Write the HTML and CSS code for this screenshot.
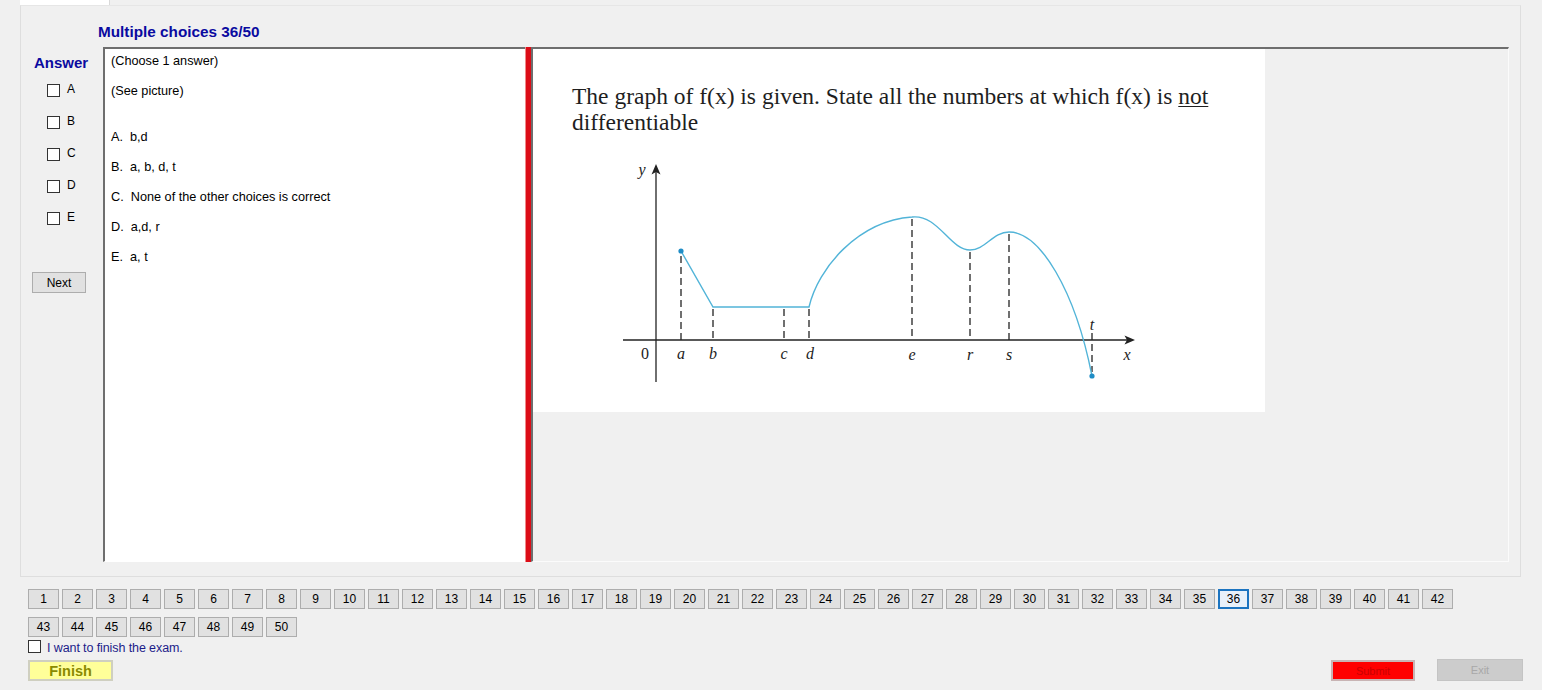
FILE: index.html
```html
<!DOCTYPE html>
<html>
<head>
<meta charset="utf-8">
<title>Exam</title>
<link rel="stylesheet" href="styles.css">
</head>
<body>
<div class="tabstrip"><div class="tab"></div></div>
<div class="tabpage">
  <div class="header"><span class="title">Multiple choices 36/50</span></div>
  <div class="main">
    <div class="leftcol">
      <div class="answer">Answer</div>
      <div class="opts">
        <div class="opt"><span class="cb"></span><span class="optlabel">A</span></div>
        <div class="opt"><span class="cb"></span><span class="optlabel">B</span></div>
        <div class="opt"><span class="cb"></span><span class="optlabel">C</span></div>
        <div class="opt"><span class="cb"></span><span class="optlabel">D</span></div>
        <div class="opt"><span class="cb"></span><span class="optlabel">E</span></div>
      </div>
      <div class="btn next">Next</div>
    </div>
    <div class="textpanel">
      <div class="line">(Choose 1 answer)</div>
      <div class="line">(See picture)</div>
      <div class="line gap">A.&nbsp; b,d</div>
      <div class="line">B.&nbsp; a, b, d, t</div>
      <div class="line">C.&nbsp; None of the other choices is correct</div>
      <div class="line">D.&nbsp; a,d, r</div>
      <div class="line">E.&nbsp; a, t</div>
    </div>
    <div class="redbar"></div>
    <div class="picpanel">
      <div class="picture">
        <div class="question">The graph of f(x) is given. State all the numbers at which f(x) is <u>not</u><br>differentiable</div>
        <svg class="graph" width="732" height="260" viewBox="533 140 732 260" xmlns="http://www.w3.org/2000/svg">
          <g stroke="#333" stroke-width="1.4" stroke-dasharray="7,4" fill="none">
            <line x1="681" y1="256" x2="681" y2="340"/>
            <line x1="713" y1="309" x2="713" y2="340"/>
            <line x1="784" y1="309" x2="784" y2="340"/>
            <line x1="809" y1="309" x2="809" y2="340"/>
            <line x1="912" y1="219" x2="912" y2="340"/>
            <line x1="970" y1="252" x2="970" y2="340"/>
            <line x1="1009" y1="234" x2="1009" y2="340"/>
            <line x1="1092" y1="333" x2="1092" y2="372"/>
          </g>
          <g stroke="#222" stroke-width="1.3" fill="none">
            <line x1="656" y1="170" x2="656" y2="382"/>
            <line x1="623" y1="340" x2="1128" y2="340"/>
          </g>
          <path d="M656,164 L660.5,174.5 L656,172 L651.5,174.5 Z" fill="#222"/>
          <path d="M1135,340 L1124.5,335.5 L1127,340 L1124.5,344.5 Z" fill="#222"/>
          <path d="M681,251 L713,307 L809,307 C818,268 858,221 912,217 C938,214 950,250 970,250 C985,250 993,232 1009,232 C1040,232 1075,290 1092,376" stroke="#52b4d8" stroke-width="1.4" fill="none"/>
          <circle cx="681" cy="251" r="2.6" fill="#1f8dc6"/>
          <circle cx="1092" cy="376" r="2.6" fill="#1f8dc6"/>
          <g font-family="'Liberation Serif', serif" font-size="16" font-style="italic" fill="#222" text-anchor="middle">
            <text x="642" y="175">y</text>
            <text x="681" y="359">a</text>
            <text x="713" y="359">b</text>
            <text x="784" y="359">c</text>
            <text x="810" y="359">d</text>
            <text x="912" y="360">e</text>
            <text x="970" y="360">r</text>
            <text x="1009" y="360">s</text>
            <text x="1127" y="360">x</text>
            <text x="1092" y="330">t</text>
          </g>
          <text x="645" y="359" font-family="'Liberation Serif', serif" font-size="16" fill="#222" text-anchor="middle">0</text>
        </svg>
      </div>
    </div>
  </div>
</div>
<div class="bottom">
  <div class="numrow">
    <div class="num">1</div><div class="num">2</div><div class="num">3</div><div class="num">4</div><div class="num">5</div><div class="num">6</div><div class="num">7</div><div class="num">8</div><div class="num">9</div><div class="num">10</div><div class="num">11</div><div class="num">12</div><div class="num">13</div><div class="num">14</div><div class="num">15</div><div class="num">16</div><div class="num">17</div><div class="num">18</div><div class="num">19</div><div class="num">20</div><div class="num">21</div><div class="num">22</div><div class="num">23</div><div class="num">24</div><div class="num">25</div><div class="num">26</div><div class="num">27</div><div class="num">28</div><div class="num">29</div><div class="num">30</div><div class="num">31</div><div class="num">32</div><div class="num">33</div><div class="num">34</div><div class="num">35</div><div class="num current">36</div><div class="num">37</div><div class="num">38</div><div class="num">39</div><div class="num">40</div><div class="num">41</div><div class="num">42</div>
  </div>
  <div class="numrow">
    <div class="num">43</div><div class="num">44</div><div class="num">45</div><div class="num">46</div><div class="num">47</div><div class="num">48</div><div class="num">49</div><div class="num">50</div>
  </div>
  <div class="finishcheck"><span class="cb"></span><span class="finishtext">I want to finish the exam.</span></div>
  <div class="actions">
    <div class="btn finish">Finish</div>
    <div class="spacer"></div>
    <div class="btn submit">Submit</div>
    <div class="btn exit">Exit</div>
  </div>
</div>
</body>
</html>
```

FILE: styles.css
```css
html, body {
  margin: 0;
  padding: 0;
}
body {
  width: 1542px;
  height: 690px;
  overflow: hidden;
  background: #f0f0f0;
  font-family: "Liberation Sans", Arial, sans-serif;
  font-size: 12.5px;
  color: #000;
}
.tabstrip {
  height: 5px;
  display: flex;
}
.tab {
  margin-left: 20px;
  width: 89px;
  height: 5px;
  background: #fff;
  border-right: 1px solid #d9d9d9;
}
.tabpage {
  margin-left: 20px;
  width: 1499px;
  height: 570px;
  border: 1px solid #dedede;
  border-top-color: #e6e6e6;
}
.header {
  height: 41px;
  box-sizing: border-box;
  padding-top: 18px;
  padding-left: 77px;
}
.title {
  font-weight: bold;
  font-size: 15.3px;
  line-height: 15px;
  color: #0a0aa0;
  display: block;
}
.main {
  display: flex;
  height: 515px;
}
.leftcol {
  width: 82px;
  flex: none;
}
.answer {
  margin-top: 8px;
  margin-left: 13px;
  font-weight: bold;
  font-size: 15px;
  line-height: 15px;
  color: #0a0aa0;
}
.opts {
  margin-top: 4px;
  margin-left: 26px;
}
.opt {
  height: 32px;
  display: flex;
  align-items: center;
}
.cb {
  width: 11px;
  height: 11px;
  border: 1px solid #333;
  background: #fff;
  flex: none;
}
.optlabel {
  margin-left: 7px;
  font-size: 12px;
  line-height: 12px;
  position: relative;
  top: -1px;
}
.btn {
  box-sizing: border-box;
  display: flex;
  align-items: center;
  justify-content: center;
}
.next {
  margin-top: 38px;
  margin-left: 11px;
  width: 54px;
  height: 21px;
  background: #e1e1e1;
  border: 1px solid #adadad;
  font-size: 12px;
}
.textpanel {
  width: 422px;
  flex: none;
  box-sizing: border-box;
  background: #fff;
  border-left: 2px solid #6e6e6e;
  border-top: 2px solid #6e6e6e;
  border-bottom: 1px solid #fff;
  padding-left: 6px;
  font-size: 12.7px;
}
.line {
  height: 30px;
  line-height: 24px;
  white-space: nowrap;
}
.line.gap {
  margin-top: 16px;
}
.redbar {
  width: 6px;
  flex: none;
  background: #dc0d17;
  border-left: 1px solid #f08a8a;
  box-sizing: border-box;
}
.picpanel {
  width: 978px;
  flex: none;
  box-sizing: border-box;
  border-left: 2px solid #6e6e6e;
  border-top: 2px solid #6e6e6e;
  border-right: 1px solid #fbfbfb;
  border-bottom: 1px solid #fbfbfb;
  background: #f0f0f0;
}
.picture {
  width: 732px;
  height: 363px;
  background: #fff;
  display: flex;
  flex-direction: column;
}
.question {
  height: 91px;
  box-sizing: border-box;
  padding-top: 34px;
  padding-left: 39px;
  font-family: "Liberation Serif", "Times New Roman", serif;
  font-size: 23.5px;
  line-height: 26px;
  color: #1e1e1e;
  white-space: nowrap;
}
.question u {
  text-decoration-thickness: 1px;
  text-underline-offset: 2px;
}
.graph {
  display: block;
  flex: none;
}
.bottom {
  padding-left: 28px;
  padding-top: 12px;
}
.numrow {
  display: flex;
  gap: 3px;
}
.numrow + .numrow {
  margin-top: 8px;
}
.num {
  width: 31px;
  height: 20px;
  box-sizing: border-box;
  background: #e1e1e1;
  border: 1px solid #adadad;
  font-size: 12px;
  display: flex;
  align-items: center;
  justify-content: center;
}
.num.current {
  border: 2px solid #1c74c0;
  background: #e8f1fa;
}
.finishcheck {
  margin-top: 2px;
  height: 15px;
  display: flex;
  align-items: center;
}
.finishtext {
  margin-left: 6px;
  color: #1c1c8a;
  font-size: 12.5px;
  line-height: 14px;
  position: relative;
  top: 1px;
  letter-spacing: -0.1px;
}
.actions {
  margin-top: 6px;
  display: flex;
  align-items: flex-start;
  padding-right: 19px;
}
.finish {
  width: 85px;
  height: 21px;
  background: #ffff99;
  border: 2px solid #cfcfc0;
  font-weight: bold;
  font-size: 14.5px;
  color: #8a8a00;
}
.spacer {
  flex: 1;
}
.submit {
  width: 84px;
  height: 21px;
  background: #ff0000;
  border: 2px solid #c8b4b4;
  color: #c80000;
  font-size: 11px;
}
.exit {
  margin-left: 22px;
  margin-top: -1px;
  width: 86px;
  height: 22px;
  background: #cccccc;
  border: 1px solid #c4c4c4;
  color: #a8a8a8;
  font-size: 11px;
}
```
